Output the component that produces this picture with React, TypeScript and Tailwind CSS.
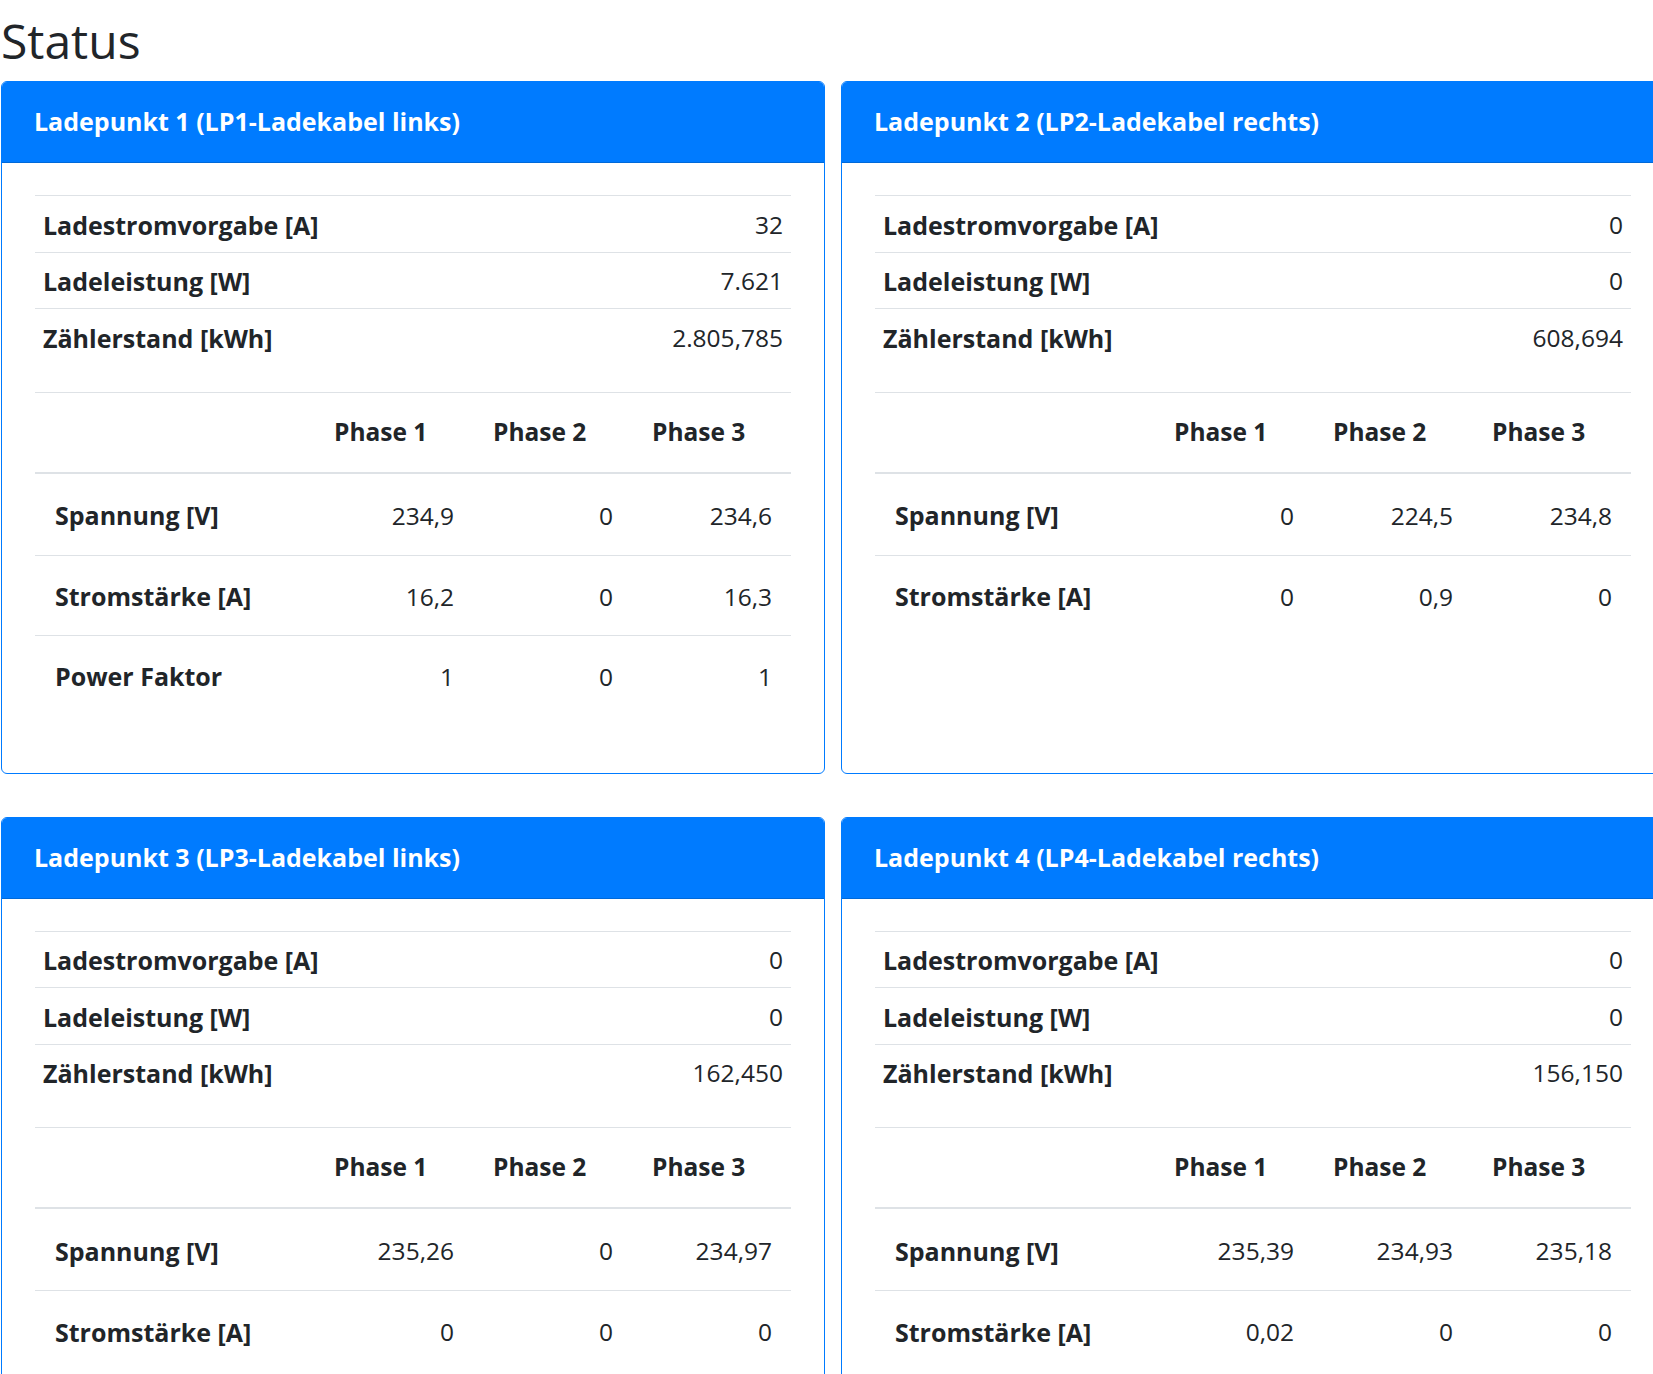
import React from "react";

type Phase = { label: string; values: string[] };
type Ladepunkt = {
  title: string;
  sollstrom: string;
  leistung: string;
  zaehler: string;
  phases: Phase[];
};

const LADEPUNKTE: Ladepunkt[] = [
  {
    title: "Ladepunkt 1 (LP1-Ladekabel links)",
    sollstrom: "32",
    leistung: "7.621",
    zaehler: "2.805,785",
    phases: [
      { label: "Spannung [V]", values: ["234,9", "0", "234,6"] },
      { label: "Stromstärke [A]", values: ["16,2", "0", "16,3"] },
      { label: "Power Faktor", values: ["1", "0", "1"] },
    ],
  },
  {
    title: "Ladepunkt 2 (LP2-Ladekabel rechts)",
    sollstrom: "0",
    leistung: "0",
    zaehler: "608,694",
    phases: [
      { label: "Spannung [V]", values: ["0", "224,5", "234,8"] },
      { label: "Stromstärke [A]", values: ["0", "0,9", "0"] },
    ],
  },
  {
    title: "Ladepunkt 3 (LP3-Ladekabel links)",
    sollstrom: "0",
    leistung: "0",
    zaehler: "162,450",
    phases: [
      { label: "Spannung [V]", values: ["235,26", "0", "234,97"] },
      { label: "Stromstärke [A]", values: ["0", "0", "0"] },
    ],
  },
  {
    title: "Ladepunkt 4 (LP4-Ladekabel rechts)",
    sollstrom: "0",
    leistung: "0",
    zaehler: "156,150",
    phases: [
      { label: "Spannung [V]", values: ["235,39", "234,93", "235,18"] },
      { label: "Stromstärke [A]", values: ["0,02", "0", "0"] },
    ],
  },
];

function InfoRow({ label, value }: { label: string; value: string }) {
  return (
    <div className="flex h-[56.5px] items-center justify-between border-t border-[#dee2e6] pt-[3px] pl-[8px] pr-[8px]">
      <span className="text-[25px] font-bold">{label}</span>
      <span>{value}</span>
    </div>
  );
}

function LadepunktCard({ lp }: { lp: Ladepunkt }) {
  return (
    <div className="flex w-[824px] flex-col overflow-hidden rounded-[6px] border border-[#007bff]">
      <div className="flex h-[81px] shrink-0 items-center border-b border-[#0069d9] bg-[#007bff] px-[32px] text-[25px] font-bold text-white">
        {lp.title}
      </div>
      <div className="flex-1 px-[33px] pt-[32px] pb-[58px]">
        {/* Eckdaten */}
        <div>
          <InfoRow label="Ladestromvorgabe [A]" value={lp.sollstrom} />
          <InfoRow label="Ladeleistung [W]" value={lp.leistung} />
          <InfoRow label="Zählerstand [kWh]" value={lp.zaehler} />
        </div>

        {/* Phasen */}
        <div className="mt-[27px]">
          <div className="grid h-[82px] grid-cols-[279px_1fr_1fr_1fr] items-center border-t border-b-2 border-[#dee2e6] text-[24.5px] font-bold">
            <span />
            <span className="pl-[20px]">Phase 1</span>
            <span className="pl-[20px]">Phase 2</span>
            <span className="pl-[20px]">Phase 3</span>
          </div>
          {lp.phases.map((p, i) => (
            <div
              key={p.label}
              className={
                i === 0
                  ? "grid h-[81px] grid-cols-[279px_1fr_1fr_1fr] items-center pt-[4px]"
                  : "grid h-[80px] grid-cols-[279px_1fr_1fr_1fr] items-center border-t border-[#dee2e6] pt-[4px]"
              }
            >
              <span className="pl-[20px] text-[25px] font-bold">{p.label}</span>
              {p.values.map((v, j) => (
                <span key={j} className="pr-[19px] text-right">
                  {v}
                </span>
              ))}
            </div>
          ))}
        </div>
      </div>
    </div>
  );
}

export default function App() {
  return (
    <div
      className="h-screen w-full overflow-hidden bg-white text-[24.5px] text-[#212529]"
      style={{ fontFamily: '"Open Sans", "Noto Sans", sans-serif' }}
    >
      <h1 className="h-[81px] pl-[1px] pt-[12px] text-[48px] leading-[58px] font-normal">
        Status
      </h1>
      <div className="grid w-[1680px] grid-cols-[824px_824px] gap-x-[16px] gap-y-[43px] pl-[1px]">
        {LADEPUNKTE.map((lp) => (
          <LadepunktCard key={lp.title} lp={lp} />
        ))}
      </div>
    </div>
  );
}
